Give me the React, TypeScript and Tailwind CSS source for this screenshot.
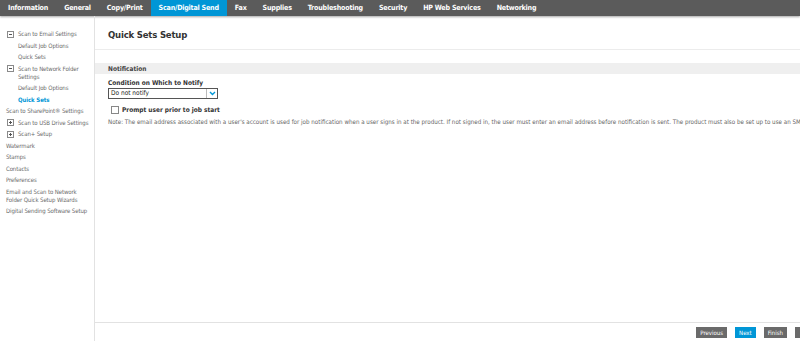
const tabs = [
  'Information',
  'General',
  'Copy/Print',
  'Scan/Digital Send',
  'Fax',
  'Supplies',
  'Troubleshooting',
  'Security',
  'HP Web Services',
  'Networking',
];

type NavItem = { label: string; level: number; toggle?: '-' | '+'; active?: boolean };

const nav: NavItem[] = [
  { label: 'Scan to Email Settings', level: 0, toggle: '-' },
  { label: 'Default Job Options', level: 1 },
  { label: 'Quick Sets', level: 1 },
  { label: 'Scan to Network Folder Settings', level: 0, toggle: '-' },
  { label: 'Default Job Options', level: 1 },
  { label: 'Quick Sets', level: 1, active: true },
  { label: 'Scan to SharePoint® Settings', level: 0 },
  { label: 'Scan to USB Drive Settings', level: 0, toggle: '+' },
  { label: 'Scan+ Setup', level: 0, toggle: '+' },
  { label: 'Watermark', level: 0 },
  { label: 'Stamps', level: 0 },
  { label: 'Contacts', level: 0 },
  { label: 'Preferences', level: 0 },
  { label: 'Email and Scan to Network Folder Quick Setup Wizards', level: 0 },
  { label: 'Digital Sending Software Setup', level: 0 },
];

const font = { fontFamily: "'Liberation Sans Narrow', 'DejaVu Sans Condensed', 'Liberation Sans', sans-serif" };

const Toggle = ({ sign }: { sign: '-' | '+' }) => (
  <span className="mt-[0.5px] mr-[4px] flex h-[7px] w-[7px] shrink-0 items-center justify-center border border-[#8a8a8a] bg-white">
    <span className="relative block h-[1px] w-[3px] bg-[#555]">
      {sign === '+' && <span className="absolute left-[1px] top-[-1px] block h-[3px] w-[1px] bg-[#555]" />}
    </span>
  </span>
);

export default function App() {
  return (
    <div className="flex h-[341px] w-[800px] flex-col overflow-hidden bg-white text-[#555]" style={font}>
      <div className="flex h-[16px] shrink-0 bg-[#5b5b5b] shadow-[0_1px_2px_rgba(0,0,0,0.35)]">
        {tabs.map((t) => (
          <div
            key={t}
            className={`flex items-center px-[8px] text-[7.1px] font-bold leading-none tracking-[-0.2px] text-white ${
              t === 'Scan/Digital Send' ? 'bg-[#0096d6]' : ''
            }`}
          >
            {t}
          </div>
        ))}
      </div>

      <div className="flex min-h-0 flex-1">
        <div className="w-[95px] shrink-0 border-r border-[#e2e2e2] pt-[14px] text-[6px] leading-[8px] tracking-[-0.1px] text-[#6a6a6a]">
          {nav.map((n, i) => (
            <div
              key={i}
              className={`mb-[3.5px] flex items-start pr-[4px] ${n.level === 1 ? 'pl-[18px]' : n.toggle ? 'pl-[7px]' : 'pl-[6px]'} ${
                n.active ? 'font-bold text-[#0096d6]' : ''
              }`}
            >
              {n.toggle && <Toggle sign={n.toggle} />}
              <span>{n.label}</span>
            </div>
          ))}
        </div>

        <div className="flex min-w-0 flex-1 flex-col">
          <div className="border-b border-[#ececec] pb-[7px] pl-[13px] pt-[12px] text-[9.5px] font-bold tracking-[-0.2px] text-[#333]">
            Quick Sets Setup
          </div>

          <div className="mt-[13px] bg-[#efefef] py-[1.5px] pl-[13px] text-[6.5px] font-bold leading-[8px] text-[#444]">
            Notification
          </div>

          <div className="flex-1 pl-[13px] pt-[5px]">
            <div className="text-[6.5px] font-bold leading-[8px] text-[#333]">Condition on Which to Notify</div>
            <div className="mt-[1px] flex h-[11px] w-[110px] border border-[#555] bg-white">
              <div className="flex flex-1 items-center pl-[2px] text-[6.5px] text-[#222]">Do not notify</div>
              <div className="flex w-[11px] items-center justify-center border-l border-[#bbb]">
                <svg width="7" height="5" viewBox="0 0 7 5">
                  <path d="M1 1l2.5 2.5L6 1" fill="none" stroke="#0096d6" strokeWidth="1.4" />
                </svg>
              </div>
            </div>
            <div className="mt-[7px] flex items-center pl-[3px]">
              <span className="mr-[3px] block h-[8px] w-[8px] border border-[#888] bg-white" />
              <span className="text-[6.5px] font-bold leading-[8px] text-[#333]">Prompt user prior to job start</span>
            </div>
            <div className="mt-[4px] whitespace-nowrap text-[6.2px] leading-[8px] text-[#666]">
              Note: The email address associated with a user's account is used for job notification when a user signs in at the product. If not signed in, the user must enter an email address before notification is sent. The product must also be set up to use an SMTP server for sending email job notifications.
            </div>
          </div>

          <div className="flex h-[19px] shrink-0 items-start justify-end gap-[8px] border-t border-[#e2e2e2] pt-[4px]">
            <div className="flex h-[11px] items-center bg-[#6a6a6a] px-[4px] text-[6px] text-white">Previous</div>
            <div className="flex h-[11px] items-center bg-[#0096d6] px-[4px] text-[6px] text-white">Next</div>
            <div className="flex h-[11px] items-center bg-[#6a6a6a] px-[4px] text-[6px] text-white">Finish</div>
            <div className="h-[11px] w-[5px] bg-[#6a6a6a]" />
          </div>
        </div>
      </div>
    </div>
  );
}
